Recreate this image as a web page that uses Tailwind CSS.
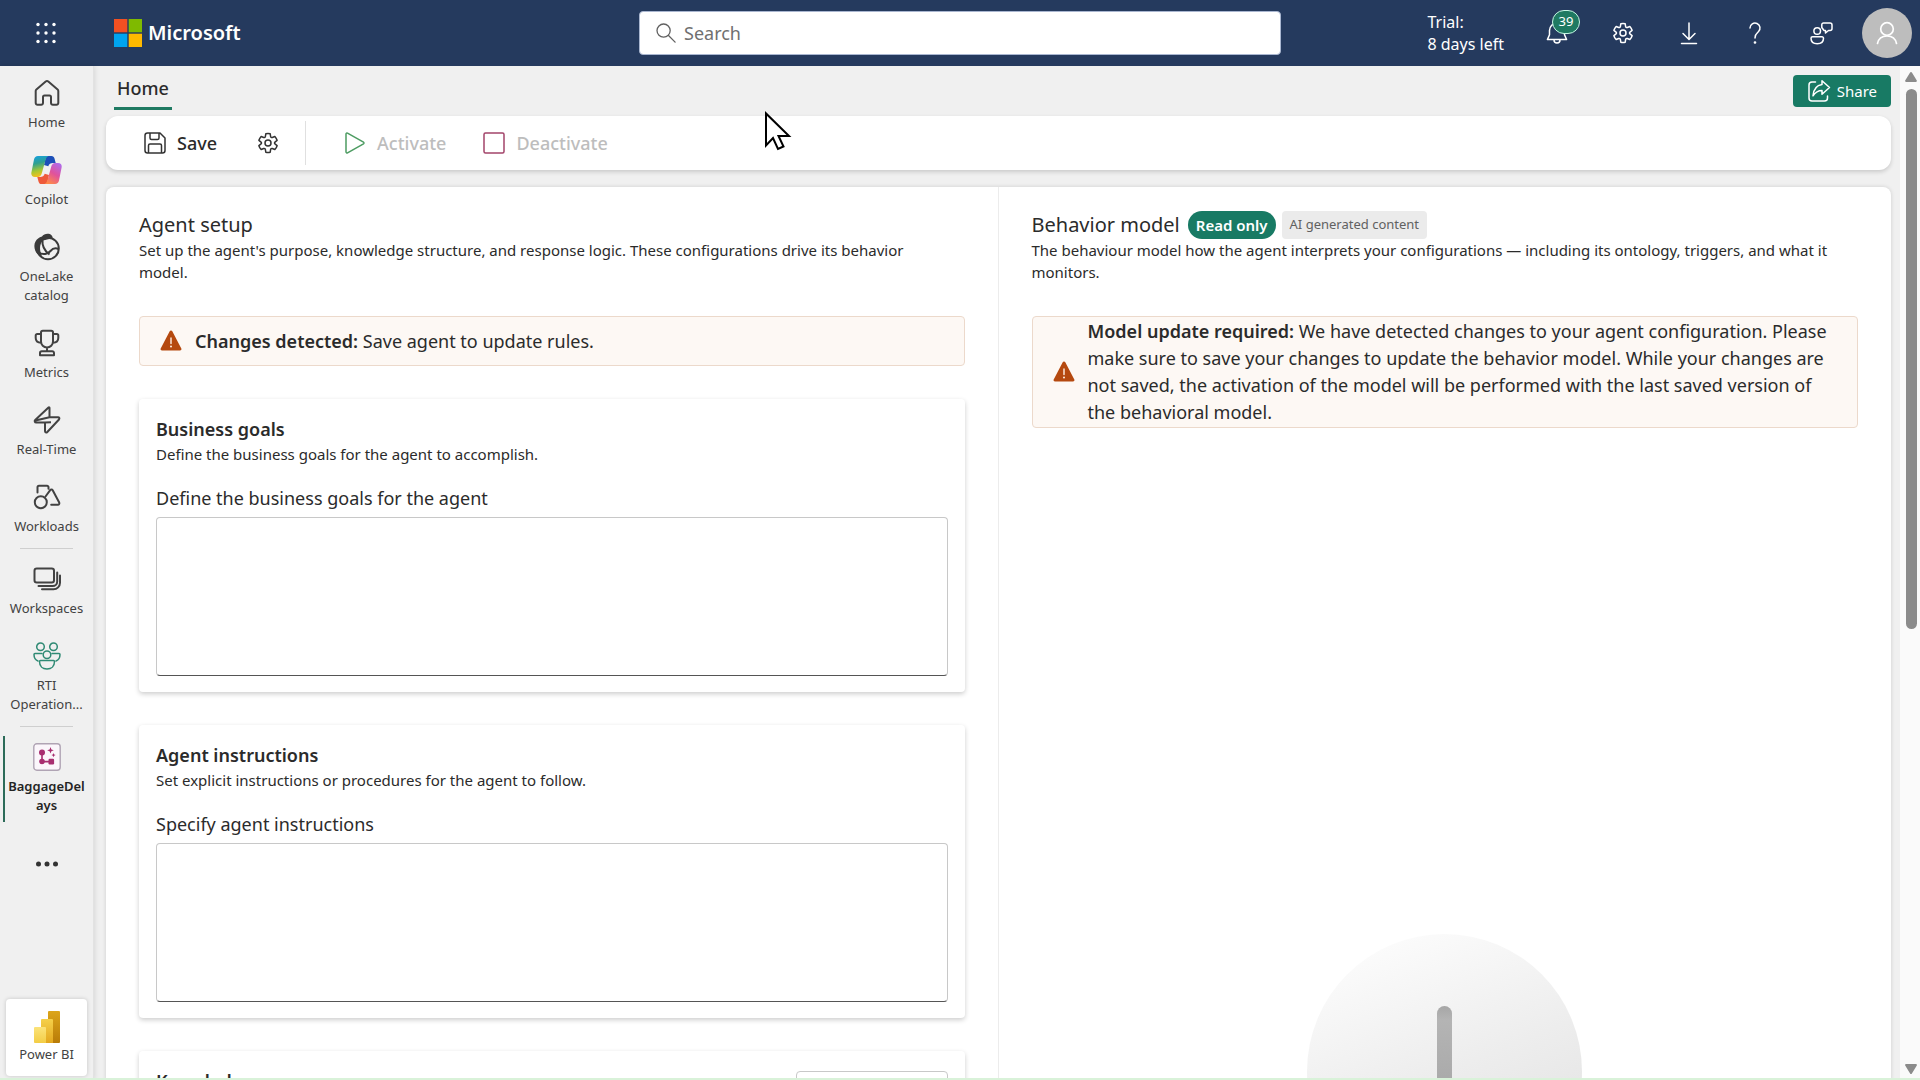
<!DOCTYPE html>
<html lang="en">
<head>
<meta charset="utf-8">
<title>BaggageDelays</title>
<meta name="viewport" content="width=device-width, initial-scale=1">
<script src="https://cdn.jsdelivr.net/npm/@tailwindcss/browser@4"></script>
</head>
<body class="relative flex h-screen flex-col overflow-hidden bg-[#f0f0f0] font-['Noto_Sans','Open_Sans',sans-serif] text-[#2b2b2b]">

<!-- Shared icon symbols -->
<svg class="hidden">
  <symbol id="gear" viewBox="0 0 24 24"><g fill="none" stroke="currentColor" stroke-width="1.5" stroke-linejoin="round"><path d="M9.8 2.3a10 10 0 0 1 4.4 0l.45 2.75a1.2 1.2 0 0 0 1.6.95l2.6-1a10 10 0 0 1 2.25 3.85l-2.15 1.75a1.2 1.2 0 0 0 0 1.85l2.15 1.75a10 10 0 0 1-2.25 3.85l-2.6-1a1.2 1.2 0 0 0-1.6.95l-.45 2.75a10 10 0 0 1-4.4 0L9.35 18a1.2 1.2 0 0 0-1.6-.95l-2.6 1A10 10 0 0 1 2.9 14.2l2.15-1.75a1.2 1.2 0 0 0 0-1.85L2.9 8.85A10 10 0 0 1 5.15 5l2.6 1a1.2 1.2 0 0 0 1.6-.95z" transform="translate(0 .48)"/><circle cx="12" cy="12" r="3"/></g></symbol>
  <symbol id="warning" viewBox="0 0 22 22"><path d="M9.7 1.2a1.5 1.5 0 0 1 2.6 0l9 17.2a1.5 1.5 0 0 1-1.3 2.2H2a1.5 1.5 0 0 1-1.3-2.2z" fill="#b5490f"/><path d="M11 8v5.5" stroke="#fff3e8" stroke-width="1.4" stroke-linecap="round"/><circle cx="11" cy="16.6" r="1" fill="#fff3e8"/></symbol>
</svg>

<header class="grid h-[66px] shrink-0 grid-cols-[1fr_642px_1fr] items-center bg-[#253a5e] text-white">
  <div class="flex items-center gap-14 pl-[34px]">
    <button aria-label="App launcher" class="size-6">
      <svg viewBox="0 0 24 24" fill="#fff"><g id="dots"><circle cx="4" cy="3.5" r="1.7"/><circle cx="12" cy="3.5" r="1.7"/><circle cx="20" cy="3.5" r="1.7"/></g><use href="#dots" y="8.5"/><use href="#dots" y="17"/></svg>
    </button>
    <a href="#" class="flex items-center gap-1.5 text-xl font-semibold">
      <svg class="size-7" viewBox="0 0 28 28"><path fill="#f25022" d="M0 0h13.3v13.3H0z"/><path fill="#7fba00" d="M14.7 0H28v13.3H14.7z"/><path fill="#00a4ef" d="M0 14.7h13.3V28H0z"/><path fill="#ffb900" d="M14.7 14.7H28V28H14.7z"/></svg>
      Microsoft
    </a>
  </div>
  <label class="flex h-11 items-center gap-2 rounded border border-[#a9b6d0] bg-white px-4 text-[#616161]">
    <svg class="size-5 shrink-0" viewBox="0 0 20 20" fill="none" stroke="currentColor" stroke-width="1.3" stroke-linecap="round"><circle cx="7.6" cy="7.6" r="6.6"/><path d="m12.5 12.5 6.6 6.6"/></svg>
    <input type="search" aria-label="Search" placeholder="Search" class="w-full text-lg outline-none placeholder:text-[#707070]">
  </label>
  <div class="flex items-center justify-end">
    <p class="mr-5 text-base leading-[22px]">Trial:<br>8 days left</p>
    <button aria-label="Notifications, 39 new" class="relative flex h-[66px] w-[66px] items-center justify-center">
      <svg class="size-6" viewBox="0 0 24 24" fill="none" stroke="currentColor" stroke-width="1.5" stroke-linejoin="round"><path d="M12 2a7.5 7.5 0 0 0-7.5 7.5v4.2L2.4 18.6h19.2l-2.1-4.9V9.500A7.500 7.500 0 0 0 12 2zM9 19a3 3 0 0 0 6 0"/></svg>
      <span class="absolute top-2.5 left-7 flex h-6 w-7 items-center justify-center rounded-full border border-[#c5f5e4] bg-[#1f7a62] text-[13px]">39</span>
    </button>
    <button aria-label="Settings" class="flex w-[66px] justify-center"><svg class="size-6"><use href="#gear"/></svg></button>
    <button aria-label="Downloads" class="flex w-[66px] justify-center"><svg class="size-6" viewBox="0 0 24 24" fill="none" stroke="currentColor" stroke-width="1.5" stroke-linecap="round" stroke-linejoin="round"><path d="M12 2v16M6 12.500l6 6 6-6M4.500 22.500h15"/></svg></button>
    <button aria-label="Help" class="flex w-[66px] justify-center"><svg class="size-6" viewBox="0 0 24 24" fill="none" stroke="currentColor" stroke-width="1.5" stroke-linecap="round"><path d="M7 7a5 5 0 1 1 8.400 3.700c-2 1.800-3.400 2.800-3.400 6.300"/><circle cx="12" cy="21.500" r=".6" fill="currentColor"/></svg></button>
    <button aria-label="Feedback" class="flex w-[66px] justify-center"><svg class="size-6" viewBox="0 0 24 24" fill="none" stroke="currentColor" stroke-width="1.500" stroke-linejoin="round"><circle cx="8.200" cy="10" r="3.300"/><path d="M3.500 15.800h9.500a1.500 1.500 0 0 1 1.500 1.500c0 3.500-2.500 5.500-6.300 5.500S2 20.800 2 17.300a1.500 1.500 0 0 1 1.500-1.500zM14.500 2H21a2 2 0 0 1 2 2v3.500a2 2 0 0 1-2 2h-1.500L16.500 12V9.500H15L12.800 6.500V3.700A1.700 1.700 0 0 1 14.500 2z"/></svg></button>
    <button aria-label="Account" class="mx-2 flex size-[50px] items-center justify-center rounded-full bg-[#bdbdbd]"><svg class="size-6" viewBox="0 0 24 24" fill="none" stroke="#fff" stroke-width="1.700" stroke-linecap="round"><circle cx="12" cy="8" r="6.300"/><path d="M2.500 22.500c1-5 5-7.500 9.500-7.500s8.500 2.500 9.500 7.500"/></svg></button>
  </div>
</header>

<div class="flex min-h-0 flex-1">
  <nav class="flex w-[94px] shrink-0 flex-col border-r border-[#e2e2e2] pb-1 text-center text-[13px] leading-[19px] text-[#424242] shadow-[0_0_6px_rgba(0,0,0,0.14)]">
    <a href="#" class="flex flex-col items-center gap-1.5 pt-[13px] pb-[11px]">
      <svg class="size-7" viewBox="0 0 28 28" fill="none" stroke="#424242" stroke-width="2" stroke-linejoin="round"><path d="M12.700 2.600a2 2 0 0 1 2.600 0l9.300 7.900a2 2 0 0 1 .7 1.500v12a1.800 1.800 0 0 1-1.800 1.800h-3.700a1.800 1.800 0 0 1-1.800-1.800v-6a1.500 1.500 0 0 0-1.500-1.500h-5a1.500 1.500 0 0 0-1.500 1.500v6a1.800 1.800 0 0 1-1.800 1.800H4.500A1.800 1.800 0 0 1 2.700 24V12a2 2 0 0 1 .7-1.500z"/></svg>
      <span>Home</span>
    </a>
    <a href="#" class="flex flex-col items-center gap-1.5 pt-[13px] pb-[11px]">
      <svg class="h-7 w-[31px]" viewBox="0 0 31 28">
        <defs>
          <linearGradient id="ca" x1="0" y1="0" x2="0.200" y2="1"><stop offset="0" stop-color="#14a0e8"/><stop offset=".4" stop-color="#2fa08f"/><stop offset=".75" stop-color="#a8c832"/><stop offset="1" stop-color="#f0c020"/></linearGradient>
          <linearGradient id="cb" x1=".8" y1="0" x2=".3" y2="1"><stop offset="0" stop-color="#b06bea"/><stop offset=".5" stop-color="#e0529c"/><stop offset="1" stop-color="#ff8a4a"/></linearGradient>
        </defs>
        <path d="M15 0h5.500c1.600 0 2.600 1 3 2.600L24.700 7H22c-2.500 0-4 1-4.700 3.300L13 9z" fill="#1c4fb8"/>
        <path d="M16 28h-5.500c-1.600 0-2.600-1-3-2.600L6.300 21H9c2.500 0 4-1 4.700-3.300L18 19z" fill="#ee5a3a"/>
        <path d="M7 0h10.500c-1.700.7-2.400 2-3 4L11 16.500C10 20 8.800 21 6.500 21H4C.8 21-.2 18.700.5 16L3 3.500C3.500 1.200 4.800 0 7 0z" fill="url(#ca)"/>
        <path d="M24 28H13.500c1.700-.7 2.400-2 3-4L20 11.500C21 8 22.200 7 24.500 7H27c3.200 0 4.200 2.300 3.500 5L28 24.500c-.5 2.300-1.800 3.500-4 3.500z" fill="url(#cb)"/>
      </svg>
      <span>Copilot</span>
    </a>
    <a href="#" class="flex flex-col items-center gap-1.5 pt-[13px] pb-[11px]">
      <svg class="size-7" viewBox="0 0 28 28"><path d="M9 3.500C11 .5 16 0 18.500 2.200c1 .8 1.200 2 .8 3L10 7.500C6.500 11 6 17 9 22.500c-1 .8-3 .2-4.500-1.500C1.500 18 .3 12 2.500 8.500 3.800 6 6 4.500 9 3.500z" fill="#3a3a3a"/><g fill="none" stroke="#3a3a3a" stroke-width="2"><circle cx="15" cy="15.500" r="10.800"/><path d="M9.500 6.500c-.5 5 1.500 11 7 15M5 19c5 3.500 10 2 12.500-1s4.500-3.500 8-2"/></g></svg>
      <span>OneLake<br>catalog</span>
    </a>
    <a href="#" class="flex flex-col items-center gap-1.5 pt-[13px] pb-[11px]">
      <svg class="size-7" viewBox="0 0 28 28" fill="none" stroke="#424242" stroke-width="2" stroke-linejoin="round"><path d="M8 3.500A1.800 1.800 0 0 1 9.800 1.700h8.400A1.800 1.800 0 0 1 20 3.500v9a6 6 0 0 1-12 0zM8 5H4.200A1.500 1.500 0 0 0 2.700 6.500V9c0 3 2 4.700 5.300 4.700M20 5h3.800a1.500 1.500 0 0 1 1.500 1.500V9c0 3-2 4.700-5.300 4.700M14 18.500v4M8.800 22.300h10.400a1.800 1.800 0 0 1 1.800 1.800v2.200H7v-2.200a1.800 1.800 0 0 1 1.800-1.800z"/></svg>
      <span>Metrics</span>
    </a>
    <a href="#" class="flex flex-col items-center gap-1.5 pt-[13px] pb-[11px]">
      <svg class="size-7" viewBox="0 0 28 28" fill="none" stroke="#424242" stroke-width="2" stroke-linejoin="round"><path d="M15.500 1.500 2.200 14c-1 1-.5 2.500 1 2.500H12V25c0 1.500 1.300 2 2.300 1L26 13.500c.8-1 .3-2.200-1-2.200h-8.500V2c0-.6-.5-.9-1-.5zM2.500 14.500l14-3.200M12 16.500l6-.2"/></svg>
      <span>Real-Time</span>
    </a>
    <a href="#" class="flex flex-col items-center gap-1.5 pt-[13px] pb-[11px]">
      <svg class="size-7" viewBox="0 0 28 28" fill="none" stroke="#424242" stroke-width="2" stroke-linejoin="round" stroke-linecap="round"><circle cx="7.800" cy="19.200" r="6"/><path d="M4.500 9.500V4.300a1.500 1.500 0 0 1 1.500-1.500h8a1.500 1.500 0 0 1 1.500 1.500v1.500M12.500 13.500l4.700-6.300a1.500 1.500 0 0 1 2.500.1l6.500 12.200a1.500 1.500 0 0 1-1.300 2.200h-6.700"/></svg>
      <span>Workloads</span>
    </a>
    <hr class="mx-5 mt-px mb-[3px] shrink-0 border-[#cfcfcf]">
    <a href="#" class="flex flex-col items-center gap-1.5 pt-[13px] pb-[11px]">
      <svg class="size-7" viewBox="0 0 28 28" fill="none" stroke="#424242" stroke-width="2" stroke-linecap="round"><rect x="1.500" y="3.500" width="19.500" height="14" rx="2.300"/><path d="M24.200 7.500v9a4.500 4.500 0 0 1-4.500 4.500H5.500M27 10.500v7.300a6.500 6.500 0 0 1-6.500 6.500H9"/></svg>
      <span>Workspaces</span>
    </a>
    <a href="#" class="flex flex-col items-center gap-1.5 pt-[13px] pb-[11px]">
      <svg class="size-7" viewBox="0 0 28 28" fill="none" stroke="#2f8a74" stroke-width="1.500" stroke-linejoin="round" stroke-linecap="round"><circle cx="7.500" cy="4.800" r="3.800"/><circle cx="20.500" cy="4.800" r="3.800"/><circle cx="14" cy="12.800" r="3.800"/><path d="M7.500 18.500h13a1 1 0 0 1 1 1c0 4.500-3 7.500-7.500 7.500s-7.500-3-7.500-7.500a1 1 0 0 1 1-1zM9 11.500H2a1 1 0 0 0-1 1c0 3 1.500 5.500 4 6.500M19 11.500h7a1 1 0 0 1 1 1c0 3-1.500 5.500-4 6.500"/></svg>
      <span>RTI<br>Operation...</span>
    </a>
    <hr class="mx-5 mt-px mb-[3px] shrink-0 border-[#cfcfcf]">
    <a href="#" aria-current="page" class="relative flex flex-col items-center gap-1.5 pt-[13px] pb-[11px] font-semibold text-[#242424]">
      <span class="absolute top-1.5 bottom-1 left-[3px] w-0.5 bg-[#2c6b59]"></span>
      <svg class="size-7" viewBox="0 0 28 28"><rect x=".8" y=".8" width="26.400" height="26.400" rx="3" fill="#fbf6fb" stroke="#b0a4b4" stroke-width="1.400"/><g fill="#a82e70"><circle cx="9" cy="9.500" r="3"/><circle cx="9" cy="18.500" r="2.800"/><rect x="15.500" y="15.800" width="5.600" height="5.600" rx="1.200"/><path d="M8.200 9h1.600v9H8.200zM9 17.800h8v1.600H9zM17.500 4l.9 2.400 2.400.9-2.400.9-.9 2.400-.9-2.400-2.400-.9 2.400-.9zM20.500 10l.6 1.500 1.500.6-1.500.6-.6 1.500-.6-1.500-1.500-.6 1.500-.6z"/></g></svg>
      <span>BaggageDel<br>ays</span>
    </a>
    <button aria-label="More" class="flex h-[76px] items-center justify-center">
      <svg class="h-2 w-6" viewBox="0 0 24 8" fill="#333"><circle cx="3.500" cy="4" r="2.500"/><circle cx="12" cy="4" r="2.500"/><circle cx="20.500" cy="4" r="2.500"/></svg>
    </button>
    <a href="#" class="mx-1.5 mt-auto flex h-[77px] shrink-0 flex-col items-center justify-center rounded bg-white shadow-[0_0_4px_rgba(0,0,0,0.18)]">
      <svg class="mb-0.5 size-8" viewBox="0 0 32 32"><defs><linearGradient id="p1" x1="0" y1="0" x2="0" y2="1"><stop offset="0" stop-color="#dca51a"/><stop offset="1" stop-color="#b87b08"/></linearGradient><linearGradient id="p2" x1="0" y1="0" x2="0" y2="1"><stop offset="0" stop-color="#f5d04a"/><stop offset="1" stop-color="#e3a71f"/></linearGradient><linearGradient id="p3" x1="0" y1="0" x2="0" y2="1"><stop offset="0" stop-color="#fbe37a"/><stop offset="1" stop-color="#f3cd45"/></linearGradient></defs><rect x="17" width="12" height="32" rx="1" fill="url(#p1)"/><path d="M10 9a1 1 0 0 1 1-1h10a1 1 0 0 1 1 1v23H10z" fill="url(#p2)"/><path d="M3 17a1 1 0 0 1 1-1h10a1 1 0 0 1 1 1v15H4a1 1 0 0 1-1-1z" fill="url(#p3)"/></svg>
      <span>Power BI</span>
    </a>
  </nav>

  <main class="flex min-w-0 flex-1 flex-col pr-[9px] pl-3">
    <div class="flex h-[50px] shrink-0 items-start justify-between pl-2">
      <a href="#" class="flex h-11 items-center border-b-3 border-[#1f7a62] px-[3px] pt-0.5 text-lg font-medium">Home</a>
      <button class="mt-[9px] flex h-8 items-center gap-1.5 rounded bg-[#187a64] px-3.5 text-[15px] text-white">
        <svg class="size-6" viewBox="0 0 24 24" fill="none" stroke="currentColor" stroke-width="1.500" stroke-linejoin="round" stroke-linecap="round"><path d="M8.500 3H5a3 3 0 0 0-3 3v13a3 3 0 0 0 3 3h12.500a3 3 0 0 0 3-3v-2M15 1.800l7.500 6.700-7.500 6.700v-3.700c-4 0-6.500 1.500-9 5.300.5-6 3.500-10.500 9-11.300z"/></svg>
        Share
      </button>
    </div>

    <div role="toolbar" class="flex h-[54px] shrink-0 items-center rounded-xl bg-white pl-[37px] text-lg font-medium shadow-[0_2px_4px_rgba(0,0,0,0.16)]">
      <button class="flex items-center gap-2.5">
        <svg class="size-6" viewBox="0 0 24 24" fill="none" stroke="#333" stroke-width="1.500" stroke-linejoin="round"><path d="M4.500 2H17l5 5v12.500a2.500 2.500 0 0 1-2.500 2.500h-15A2.500 2.500 0 0 1 2 19.500v-15A2.500 2.500 0 0 1 4.500 2zM7 2v5a1.500 1.500 0 0 0 1.500 1.500h6A1.500 1.500 0 0 0 16 7V2M5.500 22v-7.500A1.500 1.500 0 0 1 7 13h10a1.500 1.500 0 0 1 1.500 1.500V22"/></svg>
        Save
      </button>
      <button aria-label="Agent settings" class="ml-[39px]"><svg class="size-6 text-[#333]"><use href="#gear"/></svg></button>
      <span class="ml-[25px] h-11 w-px bg-[#e0e0e0]"></span>
      <button disabled class="ml-[37px] flex items-center gap-2.5 text-[#bdbdbd]">
        <svg class="size-6" viewBox="0 0 24 24" fill="none" stroke="#4d9c62" stroke-width="1.500" stroke-linejoin="round"><path d="M3 3v18a1 1 0 0 0 1.500.8l16-9a1 1 0 0 0 0-1.700l-16-9A1 1 0 0 0 3 3z"/></svg>
        Activate
      </button>
      <button disabled class="ml-9 flex items-center gap-2.5 text-[#bdbdbd]">
        <svg class="size-6" viewBox="0 0 24 24" fill="none" stroke="#a3446a" stroke-width="1.500"><rect x="2" y="2" width="20" height="20" rx="1.500"/></svg>
        Deactivate
      </button>
    </div>

    <div class="mt-[17px] grid min-h-0 flex-1 grid-cols-2 rounded-t-lg bg-white shadow-[0_0_4px_rgba(0,0,0,0.14)]">
      <section class="overflow-hidden border-r border-[#ececec] px-[33px] pt-6">
        <h1 class="text-xl leading-7">Agent setup</h1>
        <p class="pr-5 text-[15px] leading-[22px]">Set up the agent's purpose, knowledge structure, and response logic. These configurations drive its behavior model.</p>
        <div role="status" class="mt-[33px] flex h-[50px] items-center gap-[13px] rounded border border-[#ecd9cb] bg-[#fdf8f4] px-5 text-lg">
          <svg class="size-[22px] shrink-0"><use href="#warning"/></svg>
          <p><b class="font-semibold">Changes detected:</b> Save agent to update rules.</p>
        </div>

        <div class="mt-[33px] rounded bg-white px-[17px] pt-[17px] pb-4 shadow-[0_2px_5px_rgba(0,0,0,0.2)]">
          <h2 class="text-lg leading-[27px] font-semibold">Business goals</h2>
          <p class="text-[15px] leading-[22px]">Define the business goals for the agent to accomplish.</p>
          <label for="goals" class="mt-[19px] block text-lg leading-7">Define the business goals for the agent</label>
          <textarea id="goals" class="mt-[5px] block h-[159px] w-full resize-none rounded border border-[#c8c8c8] border-b-[#555] px-3 py-2 outline-none"></textarea>
        </div>

        <div class="mt-[33px] rounded bg-white px-[17px] pt-[17px] pb-4 shadow-[0_2px_5px_rgba(0,0,0,0.2)]">
          <h2 class="text-lg leading-[27px] font-semibold">Agent instructions</h2>
          <p class="text-[15px] leading-[22px]">Set explicit instructions or procedures for the agent to follow.</p>
          <label for="instructions" class="mt-[19px] block text-lg leading-7">Specify agent instructions</label>
          <textarea id="instructions" class="mt-[5px] block h-[159px] w-full resize-none rounded border border-[#c8c8c8] border-b-[#555] px-3 py-2 outline-none"></textarea>
        </div>

        <div class="mt-[33px] flex items-start justify-between rounded bg-white px-[17px] pt-[17px] pb-4 shadow-[0_2px_5px_rgba(0,0,0,0.2)]">
          <h2 class="text-lg leading-[27px] font-semibold">Knowledge</h2>
          <button aria-label="Add knowledge" class="mt-[3px] h-10 w-[152px] rounded border border-[#c8c8c8] bg-white"></button>
        </div>
      </section>

      <section class="overflow-hidden px-[33px] pt-6">
        <div class="flex h-7 items-center">
          <h1 class="text-xl leading-7">Behavior model</h1>
          <span class="ml-2 flex h-7 items-center rounded-full bg-[#187a64] px-2 text-[15px] font-semibold text-white">Read only</span>
          <span class="ml-1.5 flex h-7 items-center rounded bg-[#ebebeb] px-2 text-[13px] text-[#616161]">AI generated content</span>
        </div>
        <p class="text-[15px] leading-[22px]">The behaviour model how the agent interprets your configurations — including its ontology, triggers, and what it monitors.</p>
        <div role="status" class="mt-[33px] flex items-center gap-[13px] rounded border border-[#ecd9cb] bg-[#fdf8f4] py-px pr-5 pl-5 text-lg leading-[27px]">
          <svg class="size-[22px] shrink-0"><use href="#warning"/></svg>
          <p><b class="font-semibold">Model update required:</b> We have detected changes to your agent configuration. Please make sure to save your changes to update the behavior model. While your changes are not saved, the activation of the model will be performed with the last saved version of the behavioral model.</p>
        </div>
        <!-- Empty-state illustration -->
        <svg class="mx-auto mt-[506px] size-[275px]" viewBox="0 0 275 275"><defs><linearGradient id="disc" x1=".3" y1="0" x2=".7" y2="1"><stop offset="0" stop-color="#fcfcfc"/><stop offset=".5" stop-color="#ededed"/><stop offset="1" stop-color="#e0e0e0"/></linearGradient><linearGradient id="stem" x1="0" y1="0" x2="0" y2="1"><stop offset="0" stop-color="#a6a6a6"/><stop offset=".1" stop-color="#b4b4b4"/><stop offset="1" stop-color="#a0a0a0"/></linearGradient></defs><circle cx="137.500" cy="137.500" r="137.500" fill="url(#disc)"/><rect x="130" y="72" width="15" height="140" rx="7.500" fill="url(#stem)"/></svg>
      </section>
    </div>
  </main>

  <!-- Page scroll bar -->
  <div class="flex w-5 shrink-0 flex-col items-center bg-[#fafafa] py-1.5 pl-0.5">
    <svg class="h-2.5 w-3" viewBox="0 0 12 10" fill="#8b8b8b"><path d="M5.100.6a1 1 0 0 1 1.800 0l4.900 8c.3.700 0 1.400-.8 1.400H1C.2 10-.1 9.300.2 8.600z"/></svg>
    <div class="mt-[7px] h-[540px] w-[11px] rounded-full bg-[#8b8b8b]"></div>
    <svg class="mt-auto h-2.5 w-3 rotate-180" viewBox="0 0 12 10" fill="#8b8b8b"><path d="M5.100.6a1 1 0 0 1 1.800 0l4.900 8c.3.700 0 1.400-.8 1.400H1C.2 10-.1 9.300.2 8.600z"/></svg>
  </div>
</div>

<div class="pointer-events-none absolute inset-x-0 bottom-0 h-0.5 bg-[#d9f2d9]"></div>

<!-- Mouse pointer -->
<svg class="pointer-events-none absolute top-[111px] left-[764px] h-10 w-7" viewBox="0 0 28 40"><path d="M2 2.500v32l7-7.500 5 11 5.500-2.500-5-10.500H25z" fill="#fff" stroke="#000" stroke-width="2"/></svg>
</body>
</html>
